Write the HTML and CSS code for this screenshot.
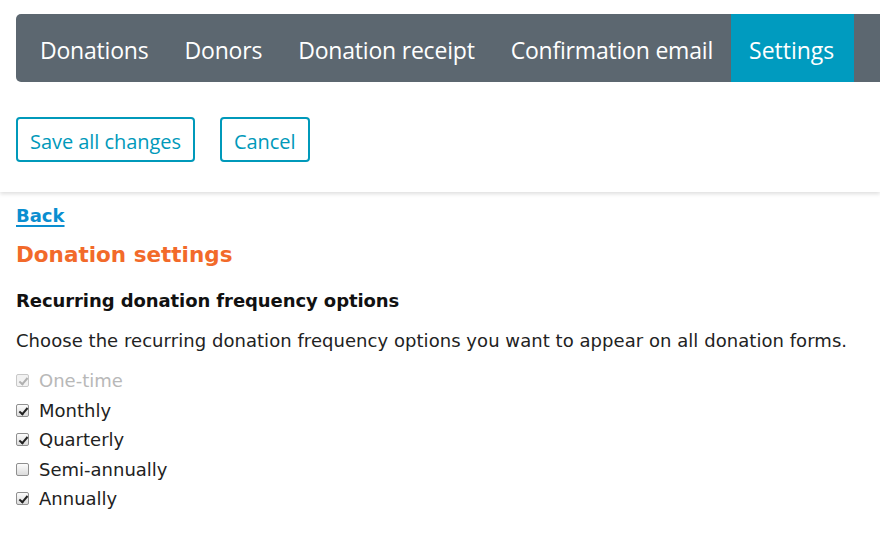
FILE: index.html
```html
<!DOCTYPE html>
<html lang="en">
<head>
<meta charset="utf-8">
<title>Donation settings</title>
<link rel="stylesheet" href="styles.css">
</head>
<body>
<header class="header">
  <nav class="tabs">
    <a class="tab" href="#">Donations</a>
    <a class="tab" href="#">Donors</a>
    <a class="tab" href="#">Donation receipt</a>
    <a class="tab" href="#">Confirmation email</a>
    <a class="tab tab-active" href="#">Settings</a>
  </nav>
  <div class="actions">
    <button class="btn" type="button">Save all changes</button>
    <button class="btn" type="button">Cancel</button>
  </div>
</header>
<main class="content">
  <a class="back" href="#">Back</a>
  <h1 class="title">Donation settings</h1>
  <h2 class="subtitle">Recurring donation frequency options</h2>
  <p class="intro">Choose the recurring donation frequency options you want to appear on all donation forms.</p>
  <ul class="options">
    <li class="option option-disabled"><label><input type="checkbox" checked disabled><span class="box"></span>One-time</label></li>
    <li class="option"><label><input type="checkbox" checked><span class="box"></span>Monthly</label></li>
    <li class="option"><label><input type="checkbox" checked><span class="box"></span>Quarterly</label></li>
    <li class="option"><label><input type="checkbox"><span class="box"></span>Semi-annually</label></li>
    <li class="option"><label><input type="checkbox" checked><span class="box"></span>Annually</label></li>
  </ul>
</main>
</body>
</html>
```

FILE: styles.css
```css
* { box-sizing: border-box; }
html, body { margin: 0; padding: 0; background: #fff; overflow: hidden; }
body { font-family: "DejaVu Sans", Verdana, sans-serif; color: #111; width: 880px; }

.header {
  padding: 14px 0 30px 16px;
  box-shadow: 0 2px 4px rgba(0, 0, 0, 0.13);
  position: relative;
}
.tabs {
  display: flex;
  height: 68px;
  background: #5c6770;
  border-radius: 5px 0 0 5px;
  padding-left: 6px;
  font-family: "Open Sans", "Noto Sans", sans-serif;
}
.tab {
  display: flex;
  align-items: center;
  padding: 3px 18px 0;
  color: #fff;
  text-decoration: none;
  font-size: 23px;
  letter-spacing: -0.2px;
}
.tab-active { background: #009bbf; padding-right: 20px; letter-spacing: 0; }

.actions {
  display: flex;
  gap: 25px;
  margin-top: 35px;
}
.btn {
  height: 45px;
  padding: 3px 12px 0;
  border: 2px solid #0099ba;
  border-radius: 4px;
  background: #fff;
  color: #0099ba;
  font-family: "Open Sans", "Noto Sans", sans-serif;
  font-size: 20px;
  letter-spacing: -0.05px;
}

.content { padding: 13px 16px 0; }
.back {
  display: inline-block;
  color: #0a8ed0;
  font-weight: bold;
  font-size: 18px;
  line-height: 21px;
  text-decoration: underline;
  text-decoration-thickness: 2px;
  text-underline-offset: 3px;
}
.title {
  margin: 16px 0 0;
  color: #f26a2a;
  font-size: 21.5px;
  line-height: 25px;
  font-weight: bold;
}
.subtitle {
  margin: 23px 0 0;
  font-size: 18px;
  line-height: 21px;
  font-weight: bold;
  color: #111;
  letter-spacing: -0.08px;
}
.intro {
  margin: 19px 0 0;
  font-size: 18px;
  line-height: 21px;
  color: #222;
  letter-spacing: 0.05px;
}
.options {
  list-style: none;
  margin: 15px 0 0;
  padding: 0;
}
.option { height: 29.5px; font-size: 18px; color: #222; }
.option label { display: flex; align-items: center; gap: 10px; height: 100%; }
.option input { position: absolute; opacity: 0; width: 0; height: 0; margin: 0; }
.box {
  width: 13px; height: 13px;
  border: 1px solid #8f8f8f;
  border-radius: 2px;
  background: linear-gradient(#fcfcfc, #dcdcdc);
  position: relative;
  flex: none;
}
.option input:checked + .box::after {
  content: "";
  position: absolute;
  left: 4px; top: 1px;
  width: 3px; height: 7px;
  border: solid #222;
  border-width: 0 2px 2px 0;
  transform: rotate(40deg);
}
.option-disabled { color: #b8b8b8; }
.option-disabled .box { border-color: #c8c8c8; background: #f2f2f2; }
.option-disabled input:checked + .box::after { border-color: #b0b0b0; }
```
